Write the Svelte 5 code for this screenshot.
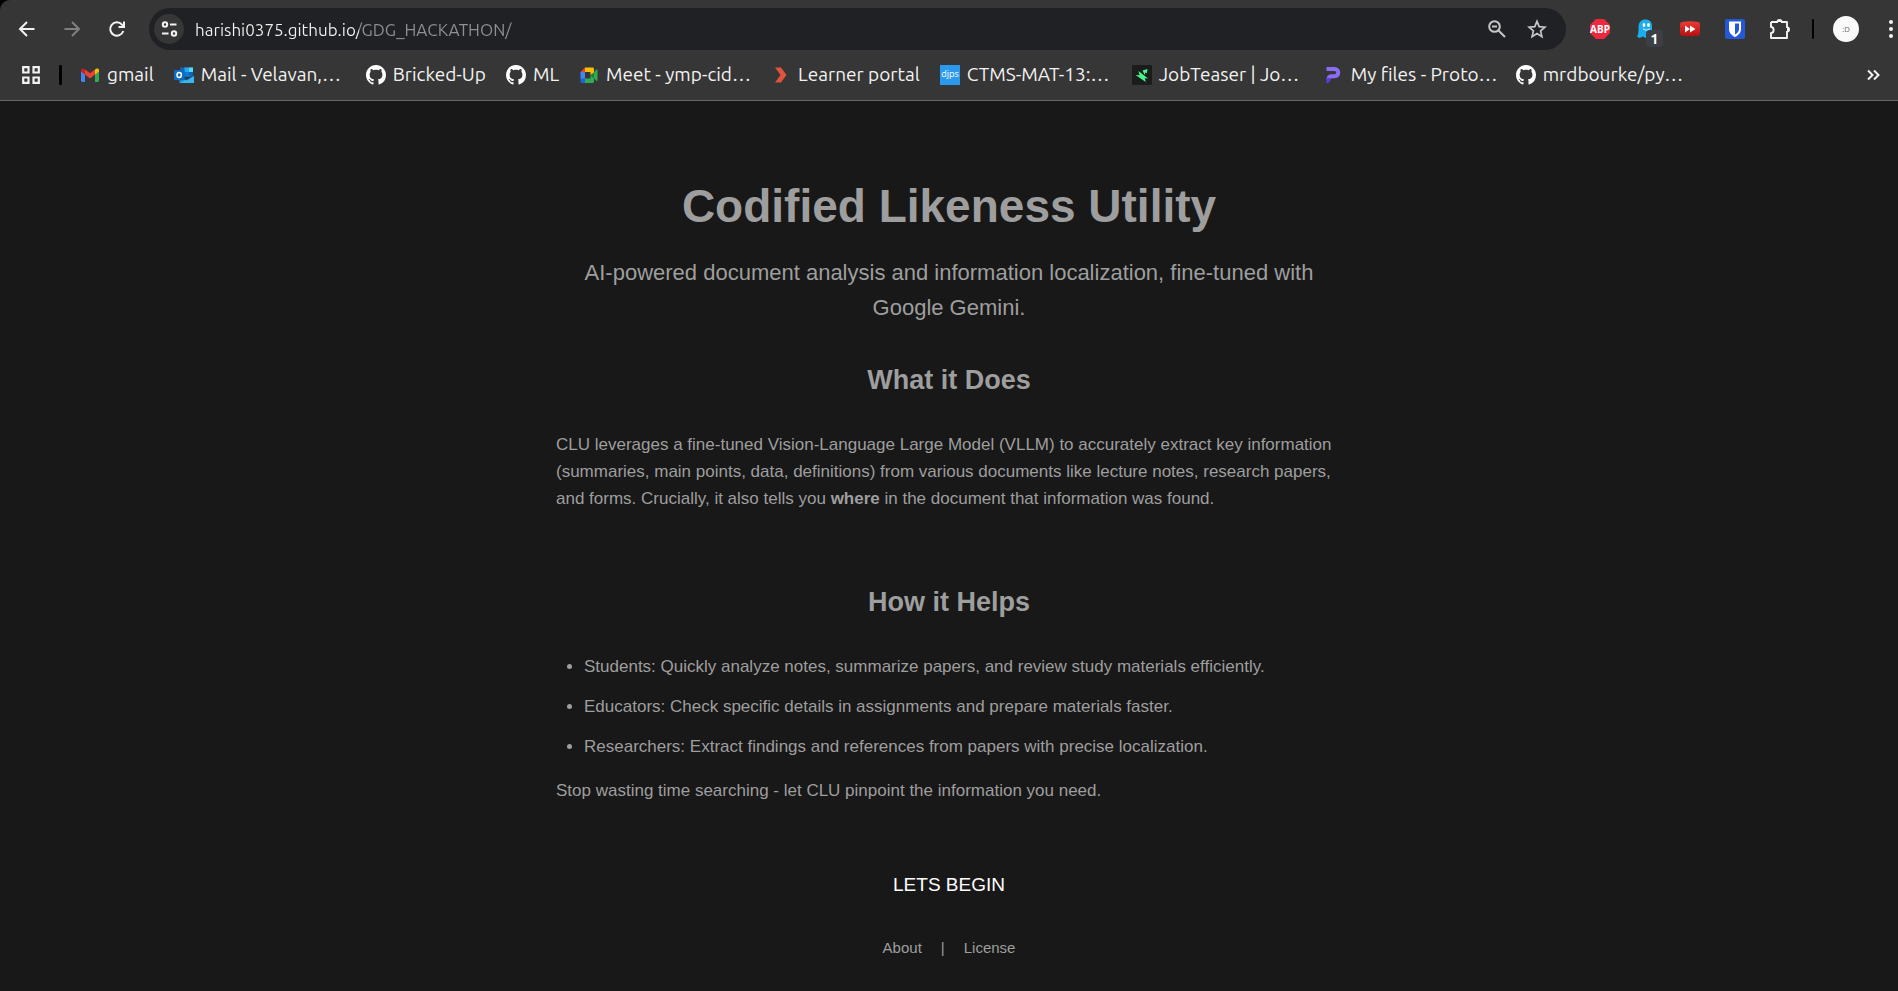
<script>
  let address = $state('harishi0375.github.io/GDG_HACKATHON/');

  const bookmarks = [
    { icon: 'gmail', label: 'gmail' },
    { icon: 'outlook', label: 'Mail - Velavan,…' },
    { icon: 'github', label: 'Bricked-Up' },
    { icon: 'github', label: 'ML' },
    { icon: 'meet', label: 'Meet - ymp-cid…' },
    { icon: 'learner', label: 'Learner portal' },
    { icon: 'djps', label: 'CTMS-MAT-13:…' },
    { icon: 'jobteaser', label: 'JobTeaser | Jo…' },
    { icon: 'proton', label: 'My files - Proto…' },
    { icon: 'github', label: 'mrdbourke/py…' }
  ];

  const audiences = [
    'Students: Quickly analyze notes, summarize papers, and review study materials efficiently.',
    'Educators: Check specific details in assignments and prepare materials faster.',
    'Researchers: Extract findings and references from papers with precise localization.'
  ];
</script>

{#snippet favicon(name)}
  <svg class="icon" viewBox="0 0 20 20" aria-hidden="true">
    {#if name === 'gmail'}
      <path fill="#4285f4" d="M1 5v10.6c0 .8.6 1.4 1.4 1.4H5V9.600z" />
      <path fill="#34a853" d="M15 9.600V17h2.600c.8 0 1.400-.6 1.400-1.400V5z" />
      <path fill="#ea4335" d="M5 4.500v5.100l5 3.800 5-3.800V4.500l-5 3.800z" />
      <path fill="#c5221f" d="M1 5v1.600l4 3V4.500l-.800-.6C2.900 2.900 1 3.600 1 5z" />
      <path fill="#fbbc04" d="M19 5v1.600l-4 3V4.500l.800-.6c1.300-1 3.200-.3 3.200 1.100z" />
    {:else if name === 'outlook'}
      <path fill="#1066b5" d="M6 2.500h13V12H6z" />
      <path fill="#28a8ea" d="M10.500 2.500H15V7h-4.500z" />
      <path fill="#50d9ff" d="M15 2.500h4V7h-4z" />
      <path fill="#0f78d4" d="M10.500 7H15v4.500h-4.500z" />
      <path fill="#1490df" d="M5.500 10.500 19.800 18H5.500z" />
      <path fill="#35b8f1" d="M20 10.500v7.500H5.500z" />
      <path fill="#123b6d" d="m6 10.500 6.500 4 7.500-4.500v.8l-7.500 4.700L6 11.500z" />
      <rect y="5" width="10.500" height="10" rx="1" fill="#0f6cbd" />
      <ellipse cx="5.200" cy="10" rx="2.200" ry="2.500" fill="none" stroke="#fff" stroke-width="1.500" />
    {:else if name === 'github'}
      <path fill="#fff" transform="scale(1.25)" d="M8 0C3.580 0 0 3.580 0 8c0 3.540 2.290 6.530 5.470 7.590.4.070.550-.170.550-.380 0-.190-.010-.820-.010-1.490-2.010.370-2.530-.490-2.690-.940-.090-.230-.480-.940-.820-1.130-.280-.150-.680-.520-.010-.530.630-.010 1.080.580 1.230.820.720 1.210 1.870.870 2.330.660.070-.520.280-.870.510-1.070-1.780-.2-3.640-.890-3.640-3.950 0-.870.310-1.590.820-2.150-.080-.2-.360-1.020.080-2.120 0 0 .670-.210 2.200.820.640-.180 1.320-.270 2-.270s1.360.090 2 .270c1.530-1.040 2.200-.820 2.200-.820.440 1.100.160 1.920.080 2.120.510.560.820 1.270.820 2.150 0 3.070-1.870 3.750-3.650 3.950.290.250.540.730.540 1.480 0 1.070-.010 1.930-.010 2.200 0 .210.150.460.550.380A8.010 8.010 0 0 0 16 8c0-4.420-3.580-8-8-8" />
    {:else if name === 'meet'}
      <path fill="#ea4335" d="M6 2.500V7H1.500z" />
      <path fill="#4285f4" d="M1.500 7H6v7H1.500z" />
      <path fill="#1967d2" d="M1.500 13.500H6V18H3c-.9 0-1.500-.6-1.500-1.500z" />
      <path fill="#fbbc04" d="M6 2.500h7.500c.9 0 1.500.6 1.500 1.500v4.500L11.500 10V7H6z" />
      <path fill="#34a853" d="M6 13.500h5.500V9.500L15 11v5.500c0 .9-.6 1.500-1.500 1.500H6z" />
      <path fill="#188038" d="m11.500 10.200 3.500-3v6.300z" />
      <path fill="#34a853" d="m15 7.200 2.500-2.700c.5-.4 1-.2 1 .4v10.500c0 .6-.5.800-1 .4L15 13.500z" />
    {:else if name === 'learner'}
      <path fill="#e0533d" d="M4 2.500h6l5.500 7.500L10 17.500H4L9.500 10z" />
    {:else if name === 'djps'}
      <path fill="#2b9aee" d="M0 0h20v20H0z" />
      <text x="10" y="12" text-anchor="middle" font-family="Open Sans, sans-serif" font-size="9" fill="#fff">djps</text>
    {:else if name === 'jobteaser'}
      <rect width="20" height="20" rx="1" fill="#1b1d1c" />
      <path fill="#48f58c" d="m10.500 5.500 5-1.500-.7 4.500-1.300-1.200-.8 2.700zM6.500 6l9.500 7.500-3.200-.3 1 3.800L3.500 10l4 .2z" />
    {:else if name === 'proton'}
      <path fill="none" stroke="#8b6cf6" stroke-width="4" d="M2.500 4h8c5 0 5 7.200 0 7.200H8c-2.500 0-3.500 1.300-3.500 3.300" />
      <path fill="#6238e0" d="M2.500 13h4c0 3-1 5-4 5.500z" />
    {/if}
  </svg>
{/snippet}

<div class="window">
  <header class="chrome">
    <div class="toolbar">
      <div class="nav">
        <button aria-label="Back">
          <svg class="icon" viewBox="0 0 20 20"><path d="M17.500 10H3m7-7-7 7 7 7" /></svg>
        </button>
        <button aria-label="Forward" class="dim">
          <svg class="icon" viewBox="0 0 20 20"><path d="M2.500 10H17m-7-7 7 7-7 7" /></svg>
        </button>
        <button aria-label="Reload">
          <svg class="icon" viewBox="0 0 20 20"><path d="M16.300 12A6.700 6.700 0 1 1 15 5.600L16.500 7.300M17 2.500V8h-5.500" /></svg>
        </button>
      </div>
      <div class="omnibox">
        <button class="site" aria-label="Site information">
          <svg class="icon" viewBox="0 0 20 20"><circle cx="6" cy="5.500" r="2.200" /><path d="M11 5.500h6.500M3 14.500h6.500" /><circle cx="15" cy="14.500" r="2.200" /></svg>
        </button>
        <input type="text" aria-label="Address" spellcheck="false" bind:value={address} />
        <button class="soft" aria-label="Zoom">
          <svg class="icon" viewBox="0 0 20 20"><circle cx="7.500" cy="7.500" r="5.300" /><path d="m11.500 11.500 6.500 6.500M5 7.500h5" /></svg>
        </button>
        <button class="soft" aria-label="Bookmark this tab">
          <svg class="icon" viewBox="0 0 20 20"><path stroke-width="1.700" d="m10 2.300 2.200 5.300 5.800.5-4.400 3.800 1.300 5.700-4.900-3-4.900 3 1.300-5.700L2 8.100l5.800-.5z" /></svg>
        </button>
      </div>
      <div class="extensions">
        <button aria-label="Adblock Plus">
          <svg class="icon large" viewBox="0 0 22 22"><path class="flat" fill="#f0283f" d="M7 1h8l6 6v8l-6 6H7l-6-6V7z" /><text x="11" y="15" text-anchor="middle" font-family="Noto Sans, sans-serif" font-size="10" font-weight="700" fill="#fff">ABP</text></svg>
        </button>
        <button aria-label="Ghostery" class="ghost">
          <svg class="icon large" viewBox="0 0 22 22"><path class="flat" fill="#18aef0" d="M4.500 9C4.500 4 7.500 1.500 11.500 1.500S18 4 18 8v11l-3.500-1-3 2-2.500-1.500L5.500 20 3 18.500c1.500-2 1.500-5 1.500-9.500z" /><ellipse class="flat" cx="10" cy="7" rx="1.400" ry="2" fill="#fff" /><ellipse class="flat" cx="14.500" cy="7" rx="1.400" ry="2" fill="#fff" /><path stroke="#fff" stroke-width="1" d="M9 10.500c2 2 5 2 7 0" /></svg>
          <span class="count">1</span>
        </button>
        <button aria-label="Fast forward">
          <svg class="icon large" viewBox="0 0 22 22">
            <defs><linearGradient id="red" x2="0" y2="1"><stop stop-color="#ee3a36" /><stop offset="1" stop-color="#b30f10" /></linearGradient></defs>
            <path class="flat" fill="url(#red)" d="M3 4q8-1.500 16 0 2 .3 2 2v9.500q0 2-2 2.300-8 1-16 0-2-.3-2-2.300V6q0-1.700 2-2z" /><path class="flat" fill="#fff" d="m6 7.500 5 3.500-5 3.500zM11 7.500l5.500 3.500L11 14.500z" />
          </svg>
        </button>
        <button aria-label="Bitwarden">
          <svg class="icon large" viewBox="0 0 22 22"><rect class="flat" x="1" y="1" width="20" height="20" rx="2" fill="#2458d8" /><path class="flat" fill="#fff" d="M5 3.500h12V11c0 4-3 6.500-6 8-3-1.500-6-4-6-8z" /><path class="flat" fill="#2458d8" d="M11 5.500h4V11c0 2.500-1.800 4.300-4 5.600z" /></svg>
        </button>
        <button aria-label="Extensions">
          <svg class="icon large" viewBox="0 0 22 22"><path stroke-width="1.900" stroke-linejoin="round" d="M2 4h7M12 4h6v6M18 13v7H2v-5c3.500 0 3.500-6 0-6V4" /><path class="flat" fill="#f2f2f2" d="M7.500 4a3 3 0 0 1 6 0zM18 8.500a3 3 0 0 1 0 6z" /></svg>
        </button>
        <span class="rule"></span>
        <button aria-label="Profile" class="profile">:D</button>
        <button aria-label="Menu" class="menu">
          <svg class="icon" viewBox="0 0 20 20"><circle class="dot" cx="10" cy="3" r="2" /><circle class="dot" cx="10" cy="10" r="2" /><circle class="dot" cx="10" cy="17" r="2" /></svg>
        </button>
      </div>
    </div>
    <nav class="bookmarks" aria-label="Bookmarks">
      <button aria-label="Tab groups">
        <svg class="icon" viewBox="0 0 20 20"><path stroke-width="2.200" d="M2.200 2.200h5.300v5.300H2.200zM12.500 2.200h5.300v5.300h-5.300zM2.200 12.500h5.300v5.300H2.200zM12.500 12.500h5.300v5.300h-5.300z" /></svg>
      </button>
      <span class="rule"></span>
      {#each bookmarks as mark}
        <a class="bookmark" class:clipped={mark.label.endsWith('…')} href="#top">{@render favicon(mark.icon)}<span>{mark.label}</span></a>
      {/each}
      <button class="more" aria-label="More bookmarks">
        <svg class="icon" viewBox="0 0 20 20"><path d="m5 5.500 4.500 4.500L5 14.500M11 5.500l4.500 4.500-4.500 4.500" /></svg>
      </button>
    </nav>
  </header>

  <main id="top">
    <h1>Codified Likeness Utility</h1>
    <p class="tagline">AI-powered document analysis and information localization, fine-tuned with Google Gemini.</p>
    <section>
      <h2>What it Does</h2>
      <p>CLU leverages a fine-tuned Vision-Language Large Model (VLLM) to accurately extract key information (summaries, main points, data, definitions) from various documents like lecture notes, research papers, and forms. Crucially, it also tells you <strong>where</strong> in the document that information was found.</p>
    </section>
    <section>
      <h2>How it Helps</h2>
      <ul>
        {#each audiences as audience}
          <li>{audience}</li>
        {/each}
      </ul>
      <p>Stop wasting time searching - let CLU pinpoint the information you need.</p>
    </section>
    <button class="begin">LETS BEGIN</button>
    <footer>
      <a href="#about">About</a>
      <span>|</span>
      <a href="#license">License</a>
    </footer>
  </main>
</div>

<style>
  :global(body) {
    background: #000;
  }
  .window {
    display: flex;
    flex-direction: column;
    min-height: calc(100vh - 1px);
    box-sizing: border-box;
    background: #181818;
    border-radius: 10px 0 0 0;
    overflow: hidden;
    font-family: 'Liberation Sans', Arial, sans-serif;
    color: #9e9e9e;
  }
  button {
    display: flex;
    align-items: center;
    justify-content: center;
    padding: 0;
    border: 0;
    background: none;
    color: inherit;
    font: inherit;
    cursor: pointer;
  }
  a {
    color: inherit;
    text-decoration: none;
  }
  .icon {
    display: block;
    flex: none;
    width: 20px;
    height: 20px;
  }
  .large {
    width: 22px;
    height: 22px;
  }
  button .icon {
    fill: none;
    stroke: currentColor;
    stroke-width: 2;
  }
  button .icon .flat,
  button .icon text {
    stroke: none;
  }
  button .icon .dot {
    fill: currentColor;
    stroke: none;
  }
  .chrome {
    background: #363636;
    border-bottom: 1px solid #666;
    color: #f2f2f2;
    font-family: Ubuntu, 'Noto Sans', sans-serif;
    font-size: 17px;
  }
  .toolbar {
    display: flex;
    align-items: center;
    padding-top: 8px;
  }
  .nav {
    display: flex;
    gap: 25px;
    padding: 0 22px 0 17px;
  }
  .dim {
    color: #808080;
  }
  .omnibox {
    display: flex;
    flex: 1;
    align-items: center;
    gap: 20px;
    height: 42px;
    box-sizing: border-box;
    padding: 0 19px 0 5px;
    border-radius: 21px;
    background: #202125;
  }
  .site {
    width: 30px;
    height: 30px;
    border-radius: 50%;
    background: #363636;
  }
  .soft {
    color: #c7c7c7;
  }
  input {
    flex: 1;
    min-width: 0;
    height: 30px;
    margin-left: -9px;
    padding: 0;
    border: 0;
    outline: 0;
    background: linear-gradient(90deg, #f2f2f2 164px, #8f9094 164px);
    background-clip: text;
    color: transparent;
    caret-color: #f2f2f2;
    font: inherit;
  }
  .extensions {
    display: flex;
    align-items: center;
    gap: 23px;
    padding-left: 23px;
  }
  .ghost {
    position: relative;
  }
  .count {
    position: absolute;
    left: 12px;
    top: 12px;
    width: 17px;
    height: 17px;
    border-radius: 4px;
    background: #3c3f46;
    color: #fff;
    font-size: 15px;
    font-weight: 600;
    line-height: 17px;
  }
  .rule {
    width: 3px;
    height: 20px;
    margin: 0 -2px;
    border-radius: 1px;
    background: #000;
  }
  .profile {
    width: 26px;
    height: 26px;
    border-radius: 50%;
    background: #fafafa;
    color: #666;
    font-size: 8px;
  }
  .extensions .rule {
    width: 2px;
    margin: 0 -4px 0 -2px;
  }
  .menu {
    margin: 0 -3px 0 -1px;
  }
  .bookmarks {
    display: flex;
    align-items: center;
    gap: 20px;
    height: 50px;
    padding: 0 15px 0 21px;
    font-size: 19px;
    line-height: 22px;
  }
  .bookmark {
    display: flex;
    flex: none;
    align-items: center;
    gap: 7px;
    white-space: nowrap;
  }
  .clipped {
    width: 172px;
  }
  .bookmark span {
    padding-bottom: 2px;
  }
  .more {
    margin-left: auto;
  }
  main {
    display: flex;
    flex-direction: column;
    align-items: center;
    width: 100%;
    max-width: 786px;
    box-sizing: border-box;
    margin: 0 auto;
    padding: 77px 0 32px;
    font-size: 17px;
    line-height: 27px;
  }
  h1,
  h2,
  p,
  ul {
    margin: 0;
  }
  h1 {
    font-size: 46px;
    line-height: 56px;
  }
  .tagline {
    margin-top: 21px;
    font-size: 22px;
    line-height: 35px;
    text-align: center;
  }
  section {
    width: 100%;
    padding: 37px 0 35px;
  }
  h2 {
    margin-bottom: 33px;
    font-size: 27px;
    line-height: 36px;
    text-align: center;
  }
  ul {
    display: flex;
    flex-direction: column;
    gap: 13px;
    margin-bottom: 17px;
    padding-left: 28px;
  }
  .begin {
    margin: 32px 0 36px;
    color: #fff;
    font-size: 19px;
    line-height: 27px;
  }
  footer {
    display: flex;
    gap: 19px;
    font-size: 15px;
  }
</style>
